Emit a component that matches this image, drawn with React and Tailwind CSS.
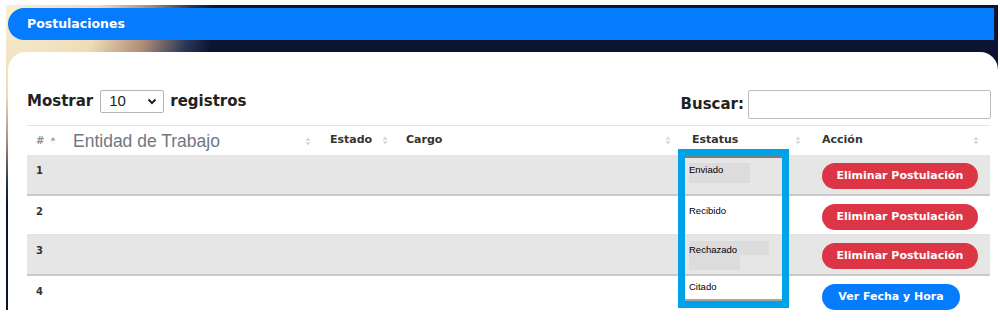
import React from 'react'

function SortIcon({ active }) {
    if (active) {
        return (
            <svg width="6" height="9" viewBox="0 0 6 9" className="shrink-0">
                <path d="M3 1 L5.5 4.5 L0.5 4.5 Z" fill="#9aa1aa" />
                <path d="M3 8 L5.5 5.5 L0.5 5.5 Z" fill="#eeeeee" />
            </svg>
        )
    }
    return (
        <svg width="6" height="9" viewBox="0 0 6 9" className="shrink-0">
            <path d="M3 0.5 L5.5 3.8 L0.5 3.8 Z" fill="#d6d6d6" />
            <path d="M3 8.5 L5.5 5.2 L0.5 5.2 Z" fill="#d6d6d6" />
        </svg>
    )
}

const cols = 'grid grid-cols-[38px_255px_77px_285px_130px_178px]'

const rows = [
    { n: '1', status: 'Enviado', gray: true, btn: 'del' },
    { n: '2', status: 'Recibido', gray: false, btn: 'del' },
    { n: '3', status: 'Rechazado', gray: true, btn: 'del' },
    { n: '4', status: 'Citado', gray: false, btn: 'ver' },
]

function StatusCell({ status }) {
    if (status === 'Enviado') {
        return (
            <div className="pt-[8px] pl-[7px]">
                <div className="w-[61px] h-[20px] bg-[#dcdcdc] pt-[1px] text-[9.5px] leading-[12px] text-black font-['Liberation_Sans',sans-serif]">
                    Enviado
                </div>
            </div>
        )
    }
    if (status === 'Rechazado') {
        return (
            <div className="pt-[6px] pl-[7px]">
                <div className="w-[80px] h-[14px] bg-[#dcdcdc] pt-[3px] text-[9.5px] leading-[12px] text-black font-['Liberation_Sans',sans-serif]">
                    Rechazado
                </div>
                <div className="w-[51px] h-[15px] bg-[#dcdcdc]"></div>
            </div>
        )
    }
    if (status === 'Citado') {
        return (
            <div className="pt-[5px] pl-[7px] text-[9.5px] leading-[12px] text-black font-['Liberation_Sans',sans-serif]">
                Citado
            </div>
        )
    }
    return (
        <div className="pt-[9px] pl-[7px] text-[9.5px] leading-[12px] text-black font-['Liberation_Sans',sans-serif]">
            {status}
        </div>
    )
}

export default function App() {
    return (
        <div className="w-[1000px] h-[323px] bg-white overflow-hidden font-['DejaVu_Sans',sans-serif]">
            <div className="ml-[6px] mt-[5px] w-[992px] h-[305px] flex flex-col bg-[radial-gradient(ellipse_210px_200px_at_0%_0%,#f7efd6_0%,#eedcb6_45%,#b08c78_68%,#2a3656_88%,#0b1430_100%)]">
                <div className="shrink-0 mt-[3px] ml-[2px] mr-[4px] h-[32px] flex items-center pl-[19px] bg-[#057bfd] rounded-l-full rounded-r-[8px] text-white font-bold text-[12.5px]">
                    Postulaciones
                </div>
                <div className="mt-[12px] ml-[2px] flex-1 min-h-0 overflow-hidden bg-white rounded-t-[18px] pl-[19px] pr-[7px] pt-[38px]">
                    <div className="flex justify-between items-start">
                        <div className="flex items-center h-[23px] text-[15px] font-bold text-[#222]">
                            <span>Mostrar</span>
                            <div className="ml-[7px] w-[64px] h-[23px] border border-[#b5b5b5] rounded-[2px] flex items-center justify-between pl-[8px] pr-[6px] font-normal text-[15px] text-[#222] font-['Liberation_Sans',sans-serif]">
                                <span>10</span>
                                <svg width="10" height="7" viewBox="0 0 10 7">
                                    <path d="M1.5 1.5 L5 5 L8.5 1.5" fill="none" stroke="#222" strokeWidth="2" />
                                </svg>
                            </div>
                            <span className="ml-[6px]">registros</span>
                        </div>
                        <div className="flex items-center h-[29px] text-[15px] font-bold text-[#222]">
                            <span>Buscar:</span>
                            <div className="ml-[4px] w-[243px] h-[29px] border border-[#bdbdbd] rounded-[2px] bg-white"></div>
                        </div>
                    </div>

                    <div className="relative mt-[6px] w-[963px]">
                        <div className={`${cols} h-[30px] items-center border-t border-[#e4e4e4] text-[11px] font-bold text-[#333]`}>
                            <div className="flex items-center gap-[6px] pl-[9px] text-[10px] text-[#8a9099]">
                                <span>#</span>
                                <SortIcon active />
                            </div>
                            <div className="flex items-center justify-between pl-[8px] pr-[9px] pt-[2px]">
                                <span className="font-normal text-[17.5px] text-[#6f7782] font-['Liberation_Sans',sans-serif]">Entidad de Trabajo</span>
                                <SortIcon />
                            </div>
                            <div className="flex items-center justify-between pl-[10px] pr-[9px]">
                                <span>Estado</span>
                                <SortIcon />
                            </div>
                            <div className="flex items-center justify-between pl-[9px] pr-[11px]">
                                <span>Cargo</span>
                                <SortIcon />
                            </div>
                            <div className="flex items-center justify-between pl-[10px] pr-[11px]">
                                <span>Estatus</span>
                                <SortIcon />
                            </div>
                            <div className="flex items-center justify-between pl-[10px] pr-[11px]">
                                <span>Acción</span>
                                <SortIcon />
                            </div>
                        </div>

                        {rows.map((r) => (
                            <div
                                key={r.n}
                                className={`${cols} items-start ${r.gray ? 'h-[41px] bg-[#e6e6e6] border-b-2 border-[#c9c9c9]' : 'h-[39px] bg-white border-b border-[#e2e2e2]'}`}
                            >
                                <div className="pt-[10px] pl-[9px] text-[10px] leading-[12px] font-bold text-[#333]">{r.n}</div>
                                <div></div>
                                <div></div>
                                <div></div>
                                <StatusCell status={r.status} />
                                <div className="pt-[8px] pl-[10px]">
                                    {r.btn === 'del' ? (
                                        <div className="w-[156px] h-[26px] rounded-full bg-[#dc3545] flex items-center justify-center text-white font-bold text-[11px]">
                                            Eliminar Postulación
                                        </div>
                                    ) : (
                                        <div className="w-[138px] h-[26px] rounded-full bg-[#057bfd] flex items-center justify-center text-white font-bold text-[11px]">
                                            Ver Fecha y Hora
                                        </div>
                                    )}
                                </div>
                            </div>
                        ))}

                        <div className="absolute left-[651px] top-[24px] w-[111px] h-[159px] border-[7px] border-[#00a2e8]">
                            <div className="h-full border-t-2 border-t-[#7d7d7d] border-b-2 border-b-[#a4a4a4]"></div>
                        </div>
                    </div>
                </div>
            </div>
        </div>
    )
}
